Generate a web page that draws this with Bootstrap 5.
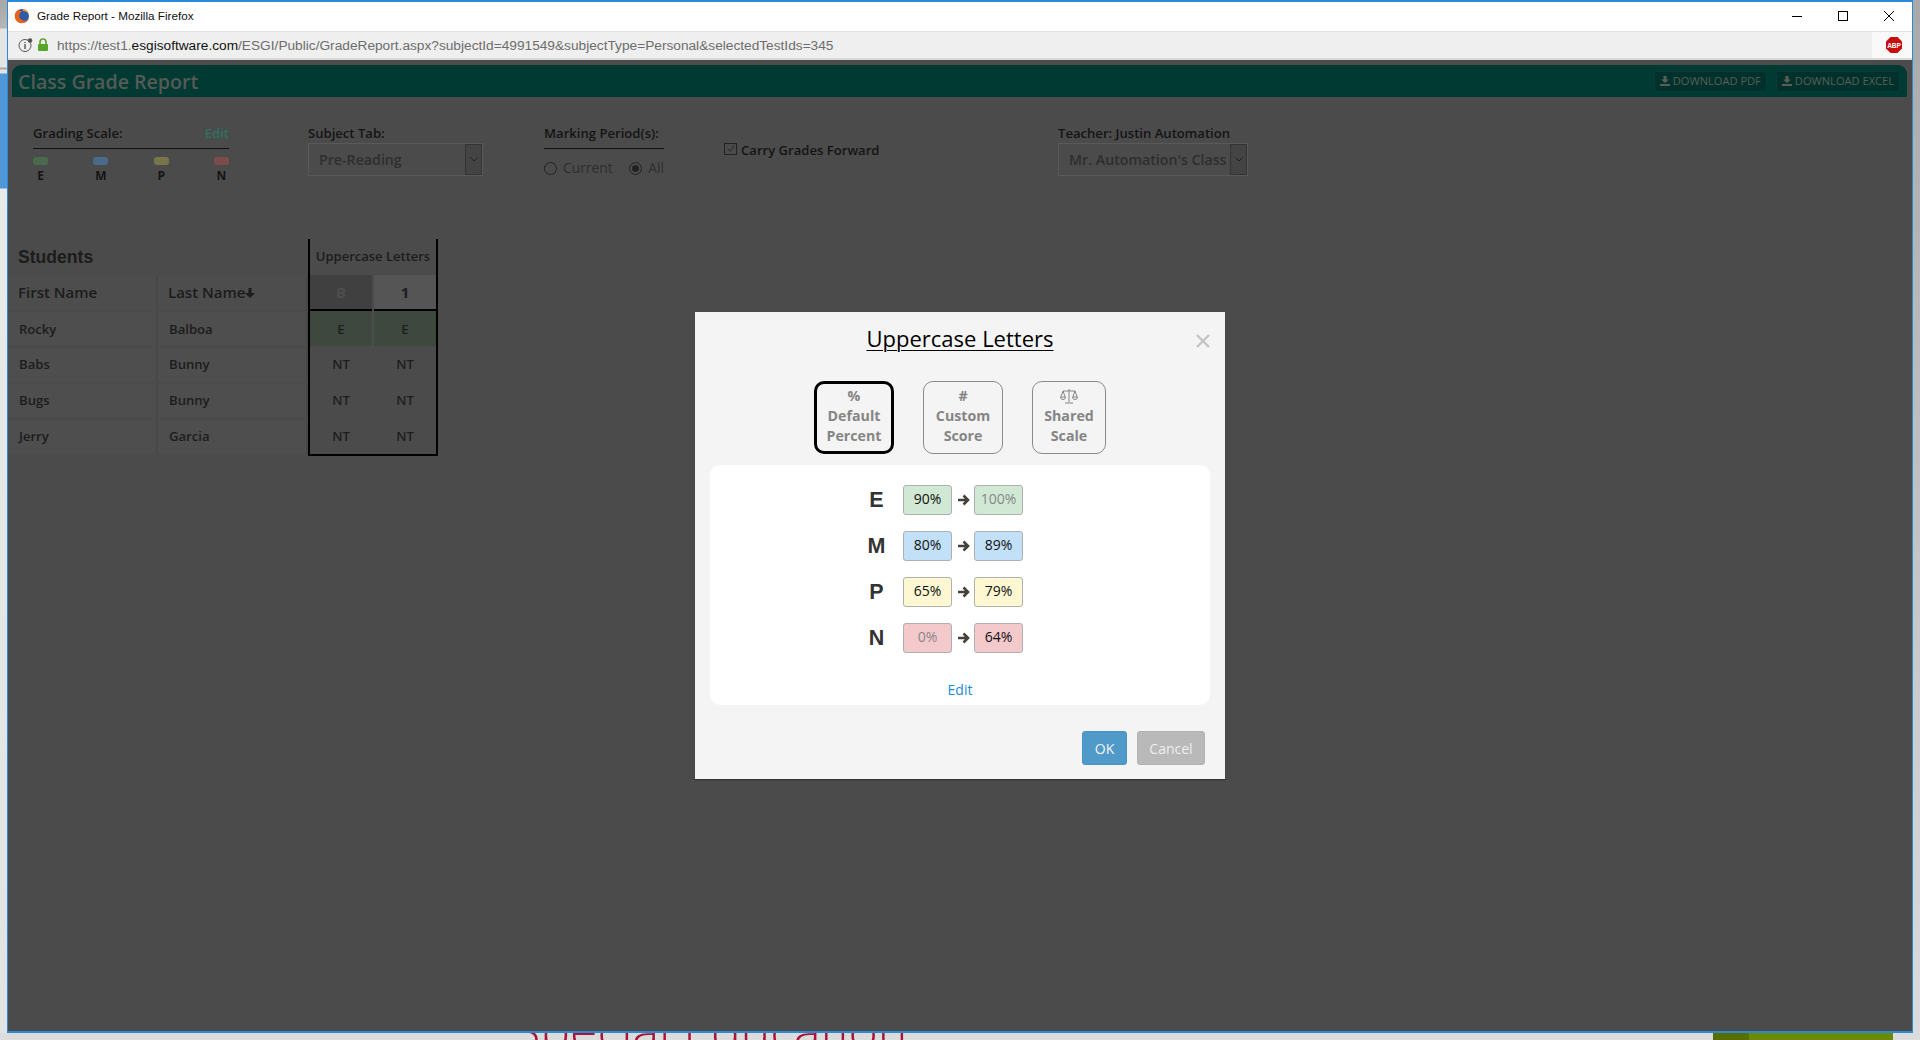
<!DOCTYPE html>
<html lang="en">

<head>
	<meta charset="utf-8">
	<meta name="viewport" content="width=device-width,initial-scale=1">
	<title>Grade Report - Mozilla Firefox</title>
	<link href="https://cdn.jsdelivr.net/npm/bootstrap@5.3.5/dist/css/bootstrap.min.css" rel="stylesheet">
	<style>
		html, body {height: 100%; overflow: hidden;}
		body {background: #d6d6d6; font-family: "Open Sans", sans-serif; font-size: 13.1px; color: #111;}

		/* desktop behind the browser window */
		.desk {position: relative; width: 1920px; height: 1040px; overflow: hidden; background: linear-gradient(#a9a9a9 0, #dcdcdc 100%);}
		.desk-strip {position: absolute; left: 0; top: 0; width: 7px; height: 1033px; background: linear-gradient(#a8a8a8 0, #b5b5b5 28px, #e4e4e4 29px, #e4e4e4 67px, #aaa 68px, #aaa 69px, #e4e4e4 70px, #e4e4e4 73px, #4f97d8 74px, #4f97d8 188px, #e9e9e9 189px, #e2e2e2 100%);}
		.desk-title {position: absolute; left: 513px; top: 996px; font: 300 50px "Open Sans", sans-serif; color: #a8153a; white-space: nowrap;}
		.desk-green {position: absolute; left: 1713px; top: 1033px; width: 180px; height: 7px; background: #6b8a08; border-left: 36px solid #566f00;}

		.browser {position: absolute; left: 7px; top: 0; width: 1906px; height: 1033px; background: #4b4b4b; border: 1px solid #2a8ad8; border-width: 2px 1px 2px 1px; display: flex; flex-direction: column;}
		.win-title {height: 29px; background: #fff; font: 11.7px "Liberation Sans", sans-serif; color: #111; padding: 0 0 2px 6px;}
		.fx-logo {width: 16px; height: 16px; margin-right: 7px;}
		.win-btn {width: 46px; height: 27px; display: flex; align-items: center; justify-content: center;}
		.url-bar {height: 29px; background: #efefef; border-top: 1px solid #e2e2e2; border-bottom: 2px solid #dadada; padding-left: 10px; color: #6d6d6d; font: 13.7px "Liberation Sans", sans-serif;}
		.url-bar b {font-weight: 400; color: #111;}
		.abp-cell {width: 40px; height: 26px; padding-left: 3px; background: #f9f9f9; display: flex; align-items: center; justify-content: center; margin-left: auto;}

		.page {flex: 1; padding: 5px 5px 0 4px; position: relative;}
		.top-head {height: 32px; background: #003a33; border-radius: 9px 9px 0 0; padding: 0 7px 0 6px;}
		.top-head h1 {font: 600 19.6px "Open Sans", sans-serif; color: #555a57; margin: 0;}
		.dl-row {gap: 9px;}
		.dl-btn {height: 21px; padding: 0 5px; background: #02302b; border: 1px solid #033c3b; border-radius: 3px; color: #566059; font-size: 11.1px; display: flex; align-items: center; gap: 3px; white-space: nowrap;}

		.filters {padding: 28px 0 0 21px; align-items: flex-start; height: 142px;}
		.flabel {font-weight: 600; font-size: 13.1px; line-height: 17px; color: #141414; white-space: nowrap;}
		.scale-box {width: 196px; margin-right: 79px;}
		.rule {border-bottom: 1px solid #111; padding-bottom: 6px;}
		.scale-edit {color: #2f7060;}
		.dot {width: 15px; height: 8px; border-radius: 3px;}
		.dot-e {background: #4a6a4d;}
		.dot-m {background: #496a88;}
		.dot-p {background: #777549;}
		.dot-n {background: #7e4b4b;}
		.scale-letters {margin-top: 2px;}
		.scale-col {font-weight: 700; font-size: 12px; text-align: center; width: 15px; line-height: 18px; color: #141414;}
		.fake-select {height: 33px; margin-top: 1px; border: 1px solid #595959; color: #2e2e2e; font-weight: 600; font-size: 14.2px; padding-left: 10px; white-space: nowrap;}
		.fake-caret {width: 17px; height: 31px; margin-left: auto; background: #444; border: 1px solid #333; display: flex; align-items: center; justify-content: center;}
		.subject-box {width: 175px; margin-right: 61px;}
		.period-box {width: 120px; margin-right: 60px;}
		.radio-line {font-size: 13.8px; color: #2e2e2e; margin-top: 9px; line-height: 20px;}
		.radio-dot {width: 13px; height: 13px; border: 1px solid #222; border-radius: 50%; display: inline-flex; align-items: center; justify-content: center; margin-right: 6px;}
		.radio-dot i {width: 7px; height: 7px; background: #222; border-radius: 50%;}
		.carry-box {width: 334px; margin-top: 17px;}
		.carry-check {width: 13px; height: 12px; border: 1px solid #222; margin-right: 4px; margin-top: -4px;}
		.teacher-select {width: 190px;}

		.grade-area {display: grid; grid-template-columns: 300px 130px; margin-left: -4px;}
		.students-head {font: 700 17.6px "Liberation Sans", sans-serif; color: #1c1c1c; height: 36px; padding-left: 10px; display: flex; align-items: center;}
		.name-grid {display: grid; grid-template-columns: 150px 150px; row-gap: 2px;}
		.name-grid > div {background: #4e4e4e; display: flex; align-items: center; padding-left: 11px; font-weight: 600; color: #1c1c1c; height: 34px; border-right: 2px solid #484848;}
		.name-grid > .nm-head {height: 35px; padding-left: 10px; font-size: 15px; background: #4d4d4d;}
		.name-grid > .nm-top {padding-top: 2px;}
		.score-box {border: solid #000; border-width: 0 2px 2px 2px; height: 217px;}
		.score-title {height: 36px; display: flex; align-items: center; justify-content: center; font-weight: 600; font-size: 13px; color: #1c1c1c; white-space: nowrap;}
		.score-grid {display: grid; grid-template-columns: 1fr 1fr; column-gap: 2px; font-weight: 600; color: #1e1e1e; text-align: center;}
		.score-grid > div {height: 36px; line-height: 36px;}
		.score-grid > .sc-b {height: 36px; background: #404040; color: #4d4d4d; font-weight: 700; font-size: 15px; line-height: 35px; border-bottom: 2px solid #000;}
		.score-grid > .sc-1 {height: 36px; background: #555; font-weight: 700; font-size: 15px; line-height: 35px; border-bottom: 2px solid #000;}
		.score-grid > .sc-e {background: #3f483f; height: 35px; line-height: 37px;}

		/* dialog sits over the dimmed page */
		.dlg {position: absolute; left: 695px; top: 312px; width: 530px; height: 467px; background: #f4f4f4; box-shadow: 0 1px 1px #333; padding: 0 15px;}
		.dlg-title {text-align: center; font-size: 22px; line-height: 30px; padding-top: 11px; height: 69px; color: #000; text-decoration: underline; text-underline-offset: 3px; text-decoration-thickness: 1px;}
		.dlg-close {position: absolute; left: 501px; top: 22px; width: 14px; height: 14px;}
		.tab-row {gap: 29px; height: 73px; justify-content: center;}
		.tab-btn {height: 73px; border: 1px solid #8a8a8a; border-radius: 10px; color: #858585; font-weight: 700; font-size: 14.2px; line-height: 20px; text-align: center; display: flex; flex-direction: column; align-items: center; justify-content: flex-start; padding-top: 4px;}
		.tab-w80 {width: 80px;}
		.tab-w74 {width: 74px;}
		.tab-on {border: 3px solid #000; padding-top: 2px;}
		.tab-icon {height: 20px; display: flex; align-items: center;}
		.panel-white {background: #fff; border-radius: 10px; height: 240px; margin-top: 11px; padding-top: 20px; display: flex; flex-direction: column; align-items: center;}
		.scale-row {display: flex; align-items: center; height: 30px; margin-bottom: 16px; margin-right: 9px;}
		.scale-letter {width: 48px; text-align: center; font: 700 21.5px "Liberation Sans", sans-serif; color: #333; margin-left: -35.5px; margin-right: 2.5px;}
		.pct {width: 49px; height: 30px; border: 1px solid #b0b0b0; border-radius: 3px; text-align: center; line-height: 26px; font-size: 14px; color: #111;}
		.pct-off {color: #888;}
		.c-e {background: #d0e8d4;}
		.c-m {background: #c2e0f8;}
		.c-p {background: #fdf8d2;}
		.c-n {background: #f3c9cb;}
		.arrow-cell {width: 22px; display: flex; justify-content: center;}
		.edit-link {color: #1a8ccf; text-decoration: none; font-size: 14px; margin-top: 10px;}
		.dlg-foot {gap: 10px; padding: 26px 5px 0 0; justify-content: flex-end;}
		.btn-ok {width: 45px; height: 34px; background: #4f9ac8; color: #f4f4f4; border: 1px solid #4a94c4; border-radius: 3px; padding: 0; font-size: 14px;}
		.btn-no {width: 68px; height: 34px; background: #b9b9b9; color: #eee; border: 1px solid #b2b2b2; border-radius: 3px; padding: 0; font-size: 14px;}
	</style>
</head>

<body>
	<div class="desk">
		<div class="desk-strip"></div>
		<div class="desk-title">Special Education</div>
		<div class="desk-green"></div>

		<div class="browser">
			<div class="win-title d-flex align-items-center">
				<svg class="fx-logo" viewBox="0 0 16 16">
					<circle cx="8" cy="8" r="7" fill="#2f5aa8"/>
					<path d="M5 1.500A7.200 7.200 0 1 0 15 9.500 5 5 0 0 1 9 12.500 5 5 0 0 1 5.500 6C6 4.500 7 4 8 3.500 6.500 3 5.500 2.500 5 1.500z" fill="#e8641b"/>
					<path d="M9 1a7 7 0 0 1 6 6C14 4.500 12 3 9 3z" fill="#f6a01e"/>
				</svg>
				<span>Grade Report - Mozilla Firefox</span>
				<div class="ms-auto d-flex">
					<div class="win-btn"><svg width="10" height="10" viewBox="0 0 10 10"><path d="M0 5.500h10" stroke="#000"/></svg></div>
					<div class="win-btn"><svg width="10" height="10" viewBox="0 0 10 10"><rect x=".5" y=".5" width="9" height="9" fill="none" stroke="#000"/></svg></div>
					<div class="win-btn"><svg width="10" height="10" viewBox="0 0 10 10"><path d="M0 0l10 10M10 0L0 10" stroke="#000" fill="none"/></svg></div>
				</div>
			</div>
			<div class="url-bar d-flex align-items-center">
				<svg width="15" height="16" viewBox="0 0 15 16" class="me-1">
					<circle cx="7" cy="8.500" r="6" fill="none" stroke="#555"/>
					<path d="M7 7v5M7 5v1" stroke="#555" stroke-width="1.400"/>
					<circle cx="12" cy="3.500" r="2.300" fill="#555"/>
				</svg>
				<svg width="12" height="14" viewBox="0 0 12 14" class="me-2">
					<path d="M3 6V4a3 3 0 0 1 6 0v2" fill="none" stroke="#57a52b" stroke-width="1.600"/>
					<rect x="1" y="6" width="10" height="7" rx="1" fill="#57a52b"/>
				</svg>
				<span>https://test1.<b>esgisoftware.com</b>/ESGI/Public/GradeReport.aspx?subjectId=4991549&amp;subjectType=Personal&amp;selectedTestIds=345</span>
				<div class="abp-cell">
					<svg width="18" height="18" viewBox="0 0 18 18">
						<path d="M5.500 1h7L17 5.500v7L12.500 17h-7L1 12.500v-7z" fill="#c70d0d"/>
						<text x="9" y="11.500" text-anchor="middle" font-family="Liberation Sans" font-weight="700" font-size="6.500" fill="#fff">ABP</text>
					</svg>
				</div>
			</div>

			<div class="page">
				<div class="top-head d-flex align-items-center justify-content-between">
					<h1>Class Grade Report</h1>
					<div class="d-flex dl-row">
						<div class="dl-btn"><svg width="10" height="10" viewBox="0 0 10 10"><path d="M3.500 0h3v3.500H9L5 7 1 3.500h2.500zM0 8h10v2H0z" fill="#566059"/></svg>DOWNLOAD PDF</div>
						<div class="dl-btn"><svg width="10" height="10" viewBox="0 0 10 10"><path d="M3.500 0h3v3.500H9L5 7 1 3.500h2.500zM0 8h10v2H0z" fill="#566059"/></svg>DOWNLOAD EXCEL</div>
					</div>
				</div>

				<div class="filters d-flex">
					<div class="scale-box">
						<div class="flabel rule d-flex justify-content-between"><span>Grading Scale:</span><span class="scale-edit">Edit</span></div>
						<div class="d-flex justify-content-between mt-2">
							<div class="dot dot-e"></div><div class="dot dot-m"></div><div class="dot dot-p"></div><div class="dot dot-n"></div>
						</div>
						<div class="d-flex justify-content-between scale-letters">
							<div class="scale-col">E</div><div class="scale-col">M</div><div class="scale-col">P</div><div class="scale-col">N</div>
						</div>
					</div>
					<div class="subject-box">
						<div class="flabel">Subject Tab:</div>
						<div class="fake-select d-flex align-items-center"><span>Pre-Reading</span>
							<div class="fake-caret"><svg width="8" height="5" viewBox="0 0 8 5"><path d="M.5.5L4 4 7.500.5" fill="none" stroke="#222"/></svg></div>
						</div>
					</div>
					<div class="period-box">
						<div class="flabel rule">Marking Period(s):</div>
						<div class="radio-line d-flex align-items-center">
							<span class="radio-dot"></span><span>Current</span>
							<span class="radio-dot ms-auto"><i></i></span><span>All</span>
						</div>
					</div>
					<div class="carry-box">
						<div class="flabel d-flex align-items-center">
							<svg class="carry-check" viewBox="0 0 13 12"><path d="M3 5l3 4 5-8" fill="none" stroke="#222"/></svg>
							<span>Carry Grades Forward</span>
						</div>
					</div>
					<div class="teacher-box">
						<div class="flabel">Teacher: Justin Automation</div>
						<div class="fake-select teacher-select d-flex align-items-center"><span>Mr. Automation's Class</span>
							<div class="fake-caret"><svg width="8" height="5" viewBox="0 0 8 5"><path d="M.5.5L4 4 7.500.5" fill="none" stroke="#222"/></svg></div>
						</div>
					</div>
				</div>

				<div class="grade-area">
					<div>
						<div class="students-head">Students</div>
						<div class="name-grid">
							<div class="nm-head">First Name</div>
							<div class="nm-head">Last Name<svg width="10" height="10" viewBox="0 0 10 10"><path d="M3.500 0h3v5H10L5 10 0 5h3.500z" fill="#1c1c1c"/></svg></div>
							<div class="nm-top">Rocky</div><div class="nm-top">Balboa</div>
							<div>Babs</div><div>Bunny</div>
							<div>Bugs</div><div>Bunny</div>
							<div>Jerry</div><div>Garcia</div>
						</div>
					</div>
					<div class="score-box">
						<div class="score-title">Uppercase Letters</div>
						<div class="score-grid">
							<div class="sc-b">B</div><div class="sc-1">1</div>
							<div class="sc-e">E</div><div class="sc-e">E</div>
							<div>NT</div><div>NT</div>
							<div>NT</div><div>NT</div>
							<div>NT</div><div>NT</div>
						</div>
					</div>
				</div>
			</div>
		</div>

		<div class="dlg">
			<div class="dlg-title">Uppercase Letters</div>
			<svg class="dlg-close" viewBox="0 0 14 14"><path d="M1 1l12 12M13 1L1 13" stroke="#c4c4c4" stroke-width="2.400" fill="none"/></svg>
			<div class="tab-row d-flex">
				<div class="tab-btn tab-w80 tab-on"><span class="tab-icon">%</span><span>Default</span><span>Percent</span></div>
				<div class="tab-btn tab-w80"><span class="tab-icon">#</span><span>Custom</span><span>Score</span></div>
				<div class="tab-btn tab-w74">
					<span class="tab-icon"><svg width="18" height="16" viewBox="0 0 18 16"><path d="M9 1v13M5 15h8M3 3h12M3 3L.8 9h4.400zM15 3l-2.200 6h4.400zM.5 9a2.500 2.500 0 0 0 5 0M12.500 9a2.500 2.500 0 0 0 5 0" fill="none" stroke="#858585"/></svg></span>
					<span>Shared</span><span>Scale</span>
				</div>
			</div>
			<div class="panel-white">
				<div class="scale-row"><div class="scale-letter">E</div><div class="pct c-e">90%</div><div class="arrow-cell"><svg width="13" height="12" viewBox="0 0 13 12"><path d="M1 6h9M6.500 1.500L11 6l-4.500 4.500" fill="none" stroke="#44403a" stroke-width="2.600"/></svg></div><div class="pct c-e pct-off">100%</div></div>
				<div class="scale-row"><div class="scale-letter">M</div><div class="pct c-m">80%</div><div class="arrow-cell"><svg width="13" height="12" viewBox="0 0 13 12"><path d="M1 6h9M6.500 1.500L11 6l-4.500 4.500" fill="none" stroke="#44403a" stroke-width="2.600"/></svg></div><div class="pct c-m">89%</div></div>
				<div class="scale-row"><div class="scale-letter">P</div><div class="pct c-p">65%</div><div class="arrow-cell"><svg width="13" height="12" viewBox="0 0 13 12"><path d="M1 6h9M6.500 1.500L11 6l-4.500 4.500" fill="none" stroke="#44403a" stroke-width="2.600"/></svg></div><div class="pct c-p">79%</div></div>
				<div class="scale-row"><div class="scale-letter">N</div><div class="pct c-n pct-off">0%</div><div class="arrow-cell"><svg width="13" height="12" viewBox="0 0 13 12"><path d="M1 6h9M6.500 1.500L11 6l-4.500 4.500" fill="none" stroke="#44403a" stroke-width="2.600"/></svg></div><div class="pct c-n">64%</div></div>
				<a href="#" class="edit-link">Edit</a>
			</div>
			<div class="dlg-foot d-flex">
				<button class="btn btn-ok">OK</button>
				<button class="btn btn-no">Cancel</button>
			</div>
		</div>
	</div>
	<script src="https://cdn.jsdelivr.net/npm/bootstrap@5.3.5/dist/js/bootstrap.bundle.min.js"></script>
</body>

</html>
